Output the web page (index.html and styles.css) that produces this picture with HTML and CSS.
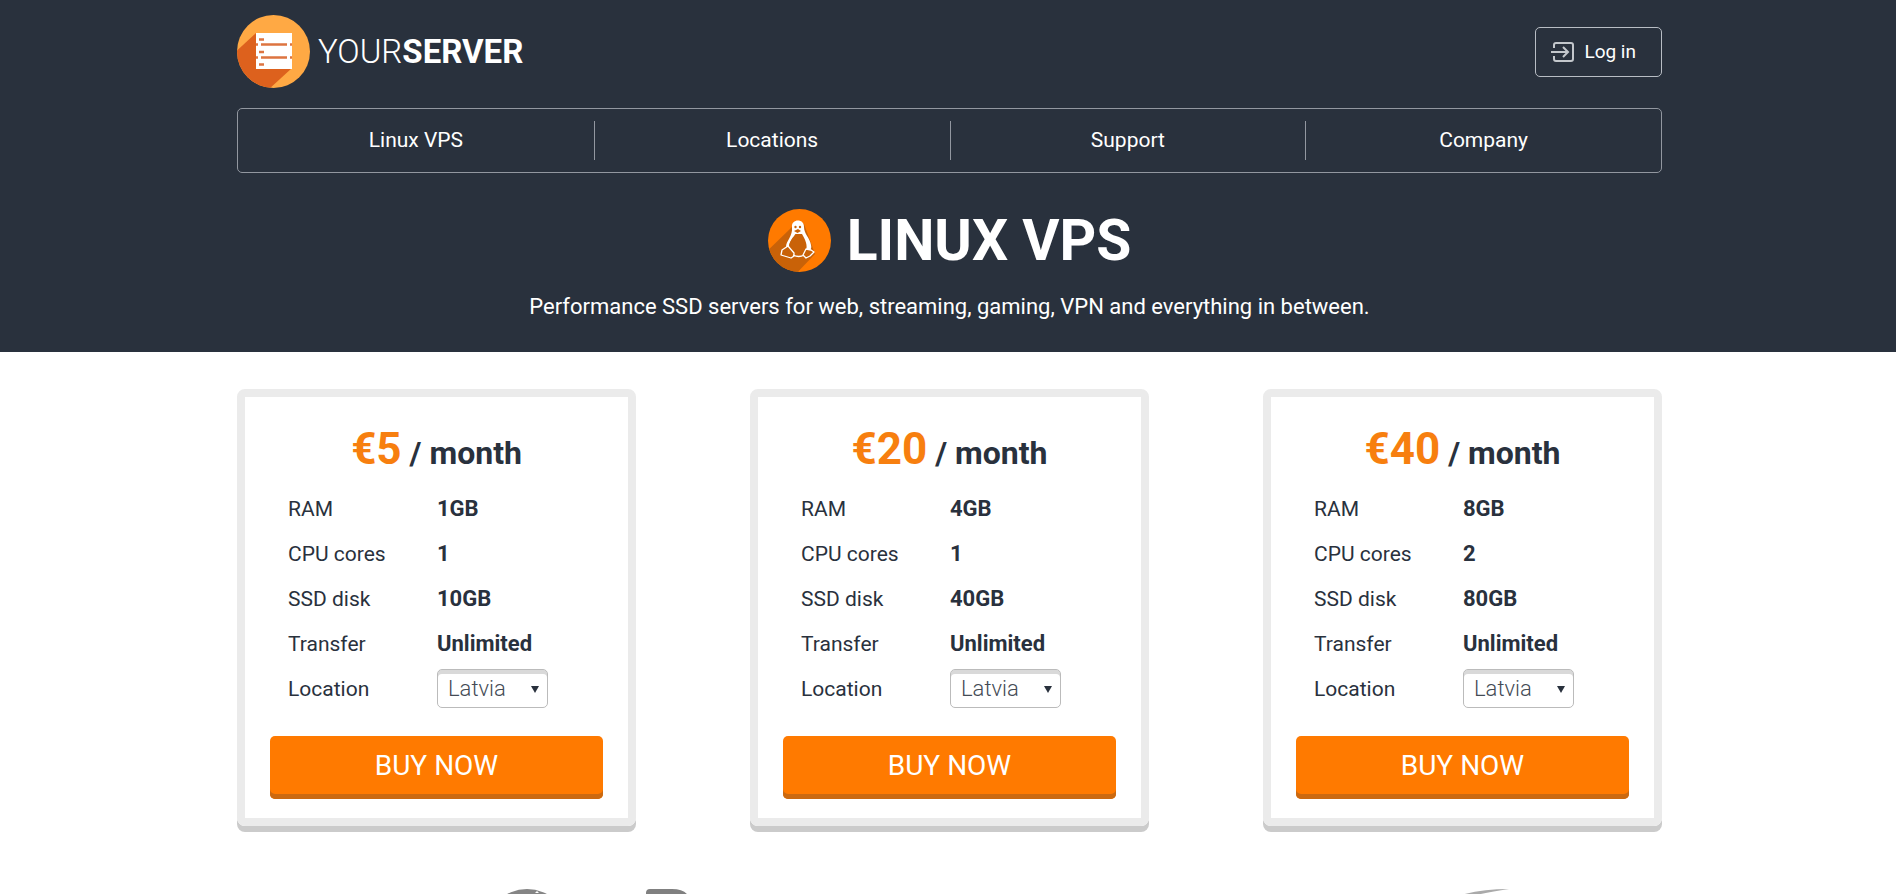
FILE: index.html
```html
<!DOCTYPE html>
<html lang="en">
<head>
<meta charset="utf-8">
<title>Linux VPS - YourServer</title>
<link rel="stylesheet" href="styles.css">
</head>
<body>
<header class="hero">
  <div class="container">
    <div class="topbar">
      <a class="brand" href="#">
        <svg class="brand-mark" viewBox="0 0 73 73" aria-hidden="true">
          <defs><clipPath id="brand-clip"><circle cx="36.500" cy="36.500" r="36.500"/></clipPath></defs>
          <g clip-path="url(#brand-clip)">
            <rect width="73" height="73" fill="#ffa944"/>
            <path d="M19 18L-8 43L20 85L55 53V18Z" fill="#dd611d"/>
          </g>
          <path d="M19 18H55V54H19Z" fill="#fff"/>
          <path d="M22 24.500h5M22 37h5M22 49.500h5M24 29.500h26M24 42.500h26M19 29.500h2M19 42.500h2M53 29.500h2M53 42.500h2" stroke="#dd7440" stroke-width="2.300"/>
        </svg>
        <span class="brand-name">YOUR<b>SERVER</b></span>
      </a>
      <a class="login" href="#">
        <svg class="login-icon" viewBox="0 0 23 20" fill="none" stroke="currentColor" stroke-width="2" aria-hidden="true">
          <path d="M3 6V3Q3 1 5 1H20Q22 1 22 3V17Q22 19 20 19H5Q3 19 3 17V14M0 10H17M12 5L17 10L12 15"/>
        </svg>
        <span>Log in</span>
      </a>
    </div>
    <nav class="menu">
      <a href="#">Linux VPS</a>
      <a href="#">Locations</a>
      <a href="#">Support</a>
      <a href="#">Company</a>
    </nav>
    <div class="heading">
      <svg class="tux" viewBox="0 0 63 63" aria-hidden="true">
        <defs><clipPath id="tux-clip"><circle cx="31.500" cy="31.500" r="31.500"/></clipPath></defs>
        <g clip-path="url(#tux-clip)">
          <rect width="63" height="63" fill="#ff7a00"/>
          <path d="M25 17L-4 45L24 69L47 45L36 15Z" fill="#c96208"/>
        </g>
        <path d="M24 18C23 10 36 9 36 18C36 25 42 29 43 36C44 40 42 42 38 42C40 36 37 30 34 25L28 25C23 30 21 34 21 40L18 38C18 32 25 27 24 18Z" fill="#fff"/>
        <path d="M21 38C21 31 27 29 27 25Q30 27 33 25C35 29 39 34 37 41C33 47 26 47 22 41Z" fill="#c96208"/>
        <circle cx="27.500" cy="18" r="1.200" fill="#c96208"/><circle cx="32" cy="18" r="1.200" fill="#c96208"/>
        <path d="M26 22L30 20L33 22L29.500 24Z" fill="#c96208"/>
        <path d="M14 41L20 37L26 44V47L23 49L13 46ZM38 40L43 41L46 43L42 47L38 49L35 46ZM25 46Q31 49 36 46" fill="#c96208" stroke="#fff" stroke-width="1.300" stroke-linejoin="round"/>
      </svg>
      <h1>LINUX VPS</h1>
    </div>
    <p class="lead">Performance SSD servers for web, streaming, gaming, VPN and everything in between.</p>
  </div>
</header>
<main class="container plans">
  <section class="plan">
    <h2><span class="price">€5</span> / month</h2>
    <table class="specs">
      <tr><th scope="row">RAM</th><td>1GB</td></tr>
      <tr><th scope="row">CPU cores</th><td>1</td></tr>
      <tr><th scope="row">SSD disk</th><td>10GB</td></tr>
      <tr><th scope="row">Transfer</th><td>Unlimited</td></tr>
      <tr><th scope="row"><label for="loc1">Location</label></th><td><span class="picker"><select id="loc1"><option>Latvia</option></select></span></td></tr>
    </table>
    <button class="buy" type="button">BUY NOW</button>
  </section>
  <section class="plan">
    <h2><span class="price">€20</span> / month</h2>
    <table class="specs">
      <tr><th scope="row">RAM</th><td>4GB</td></tr>
      <tr><th scope="row">CPU cores</th><td>1</td></tr>
      <tr><th scope="row">SSD disk</th><td>40GB</td></tr>
      <tr><th scope="row">Transfer</th><td>Unlimited</td></tr>
      <tr><th scope="row"><label for="loc2">Location</label></th><td><span class="picker"><select id="loc2"><option>Latvia</option></select></span></td></tr>
    </table>
    <button class="buy" type="button">BUY NOW</button>
  </section>
  <section class="plan">
    <h2><span class="price">€40</span> / month</h2>
    <table class="specs">
      <tr><th scope="row">RAM</th><td>8GB</td></tr>
      <tr><th scope="row">CPU cores</th><td>2</td></tr>
      <tr><th scope="row">SSD disk</th><td>80GB</td></tr>
      <tr><th scope="row">Transfer</th><td>Unlimited</td></tr>
      <tr><th scope="row"><label for="loc3">Location</label></th><td><span class="picker"><select id="loc3"><option>Latvia</option></select></span></td></tr>
    </table>
    <button class="buy" type="button">BUY NOW</button>
  </section>
</main>
<footer class="partners">
  <svg class="partners-art" viewBox="0 0 1425 84" aria-hidden="true">
    <circle cx="291" cy="42" r="42" fill="#858585"/>
    <path d="M299 4L301 2L303 4Z" fill="#fff"/>
    <path d="M410 84V4Q410 0 414 0H436Q449 0 453 8V40H431V84Z" fill="#808080"/>
    <path d="M1216 9Q1240 0 1273 0Q1245 4 1230 9Z" fill="#aaa"/>
  </svg>
</footer>
</body>
</html>
```
FILE: styles.css
```css
* { box-sizing: border-box; }
body {
  display: flex;
  flex-direction: column;
  height: 100vh;
  margin: 0;
  overflow: hidden;
  background: #fff;
  color: #29313d;
  font-family: Roboto, "Liberation Sans", sans-serif;
}
a { color: inherit; text-decoration: none; }
.container { width: calc(100% - 48px); max-width: 1428px; margin: 0 auto; padding-left: 3px; }
.hero { padding: 15px 0 29px; background: #29313d; color: #fff; }
.topbar { display: flex; align-items: center; justify-content: space-between; }
.brand { display: flex; align-items: center; gap: 8px; }
.brand-mark { width: 73px; height: 73px; }
.brand-name { font-size: 33px; font-weight: 300; line-height: 40px; }
.brand-name b { font-weight: 700; }
.login {
  display: flex;
  align-items: center;
  gap: 10px;
  height: 50px;
  padding: 0 25px 0 15px;
  border: 1px solid #b8bdc4;
  border-radius: 5px;
  font-size: 19px;
}
.login-icon { width: 23px; height: 20px; color: #c3c7cc; }
.menu {
  display: grid;
  grid-template-columns: repeat(4, 1fr);
  margin-top: 20px;
  padding: 12px 0;
  border: 1px solid #9297a0;
  border-radius: 5px;
}
.menu a { font-size: 21px; line-height: 39px; text-align: center; }
.menu a + a { border-left: 1px solid #9297a0; }
.heading { display: flex; align-items: center; justify-content: center; gap: 16px; margin-top: 36px; }
.tux { width: 63px; height: 63px; }
h1 { margin: 0; font-size: 57px; font-weight: 700; line-height: 63px; }
.lead { margin: 19px 0 0; font-size: 22px; font-weight: 400; line-height: 32px; text-align: center; }
.plans { display: grid; grid-template-columns: repeat(3, 1fr); gap: 114px; padding-top: 37px; }
.plan {
  padding: 25px 25px 19px;
  border: 8px solid #ebebeb;
  border-radius: 8px;
  box-shadow: 0 6px 0 #cbcbcb;
}
h2 { margin: 0 0 5px; font-size: 32px; font-weight: 700; line-height: 55px; text-align: center; }
.price { color: #f77f0f; font-size: 44px; }
.specs { margin: 0 18px; border-collapse: collapse; font-size: 21px; }
.specs th { width: 149px; height: 45px; padding: 0; font-weight: 400; text-align: left; }
.specs td { padding: 0; font-size: 22px; font-weight: 700; }
.picker { display: block; position: relative; width: 111px; }
.picker::after {
  position: absolute;
  top: 17px;
  right: 9px;
  border: 4px solid transparent;
  border-top: 7px solid #29313d;
  border-bottom: 0;
  content: "";
}
.picker select {
  display: block;
  width: 100%;
  height: 39px;
  padding: 0 10px;
  appearance: none;
  border: 1px solid #bbb;
  border-radius: 5px;
  background: #fff;
  box-shadow: inset 0 4px 0 #d9d9d9;
  color: #444b55;
  font: 300 22px Roboto, sans-serif;
}
.buy {
  display: block;
  width: 100%;
  height: 63px;
  margin-top: 25px;
  padding: 0 0 5px;
  border: 0;
  border-radius: 5px;
  background: #ff7a00;
  box-shadow: inset 0 -5px 0 #cb6910;
  color: #fff;
  font: 400 28px Roboto, sans-serif;
}
.partners { flex: 1 1 0; min-height: 0; margin-top: 63px; overflow: hidden; }
.partners-art { display: block; width: calc(100% - 48px); max-width: 1425px; margin: 0 auto; }
```
